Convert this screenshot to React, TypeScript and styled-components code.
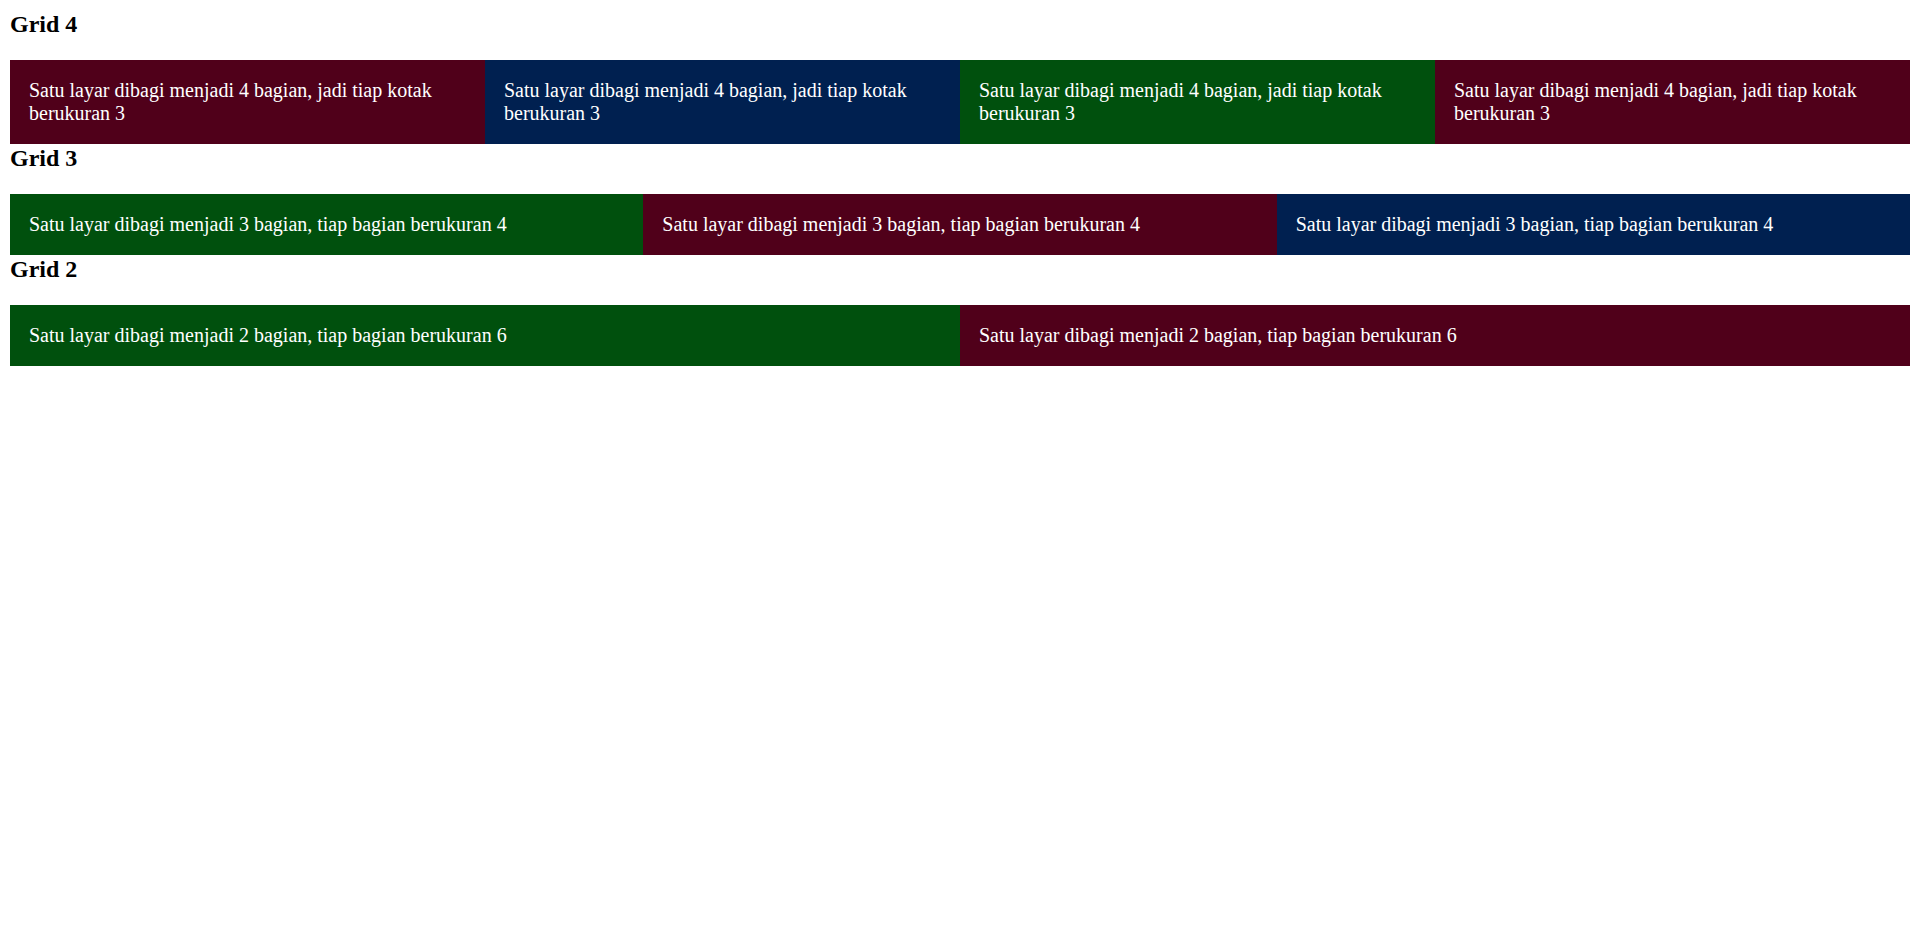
import React from "react";
import styled, { createGlobalStyle } from "styled-components";

const Global = createGlobalStyle`
  body {
    margin: 10px;
    font-family: "Liberation Serif", "Times New Roman", serif;
    background: #ffffff;
    color: #000000;
  }
`;

const Heading = styled.h2`
  margin: 0 0 22px;
  font-size: 24px;
  line-height: 28px;
  font-weight: bold;
`;

const Row = styled.div<{ $cols: number }>`
  display: grid;
  grid-template-columns: repeat(${(p) => p.$cols}, 1fr);
`;

const colors = {
  maroon: "#50001a",
  navy: "#002050",
  green: "#00500d",
} as const;

type Tone = keyof typeof colors;

const Cell = styled.div<{ $tone: Tone }>`
  background: ${(p) => colors[p.$tone]};
  color: #ffffff;
  padding: 19px 19px;
  font-size: 20px;
  line-height: 23px;
`;

const sections: { title: string; cols: number; text: string; tones: Tone[] }[] = [
  {
    title: "Grid 4",
    cols: 4,
    text: "Satu layar dibagi menjadi 4 bagian, jadi tiap kotak berukuran 3",
    tones: ["maroon", "navy", "green", "maroon"],
  },
  {
    title: "Grid 3",
    cols: 3,
    text: "Satu layar dibagi menjadi 3 bagian, tiap bagian berukuran 4",
    tones: ["green", "maroon", "navy"],
  },
  {
    title: "Grid 2",
    cols: 2,
    text: "Satu layar dibagi menjadi 2 bagian, tiap bagian berukuran 6",
    tones: ["green", "maroon"],
  },
];

export default function App() {
  return (
    <>
      <Global />
      {sections.map((s) => (
        <section key={s.title}>
          <Heading>{s.title}</Heading>
          <Row $cols={s.cols}>
            {s.tones.map((t, i) => (
              <Cell key={i} $tone={t}>
                {s.text}
              </Cell>
            ))}
          </Row>
        </section>
      ))}
    </>
  );
}
